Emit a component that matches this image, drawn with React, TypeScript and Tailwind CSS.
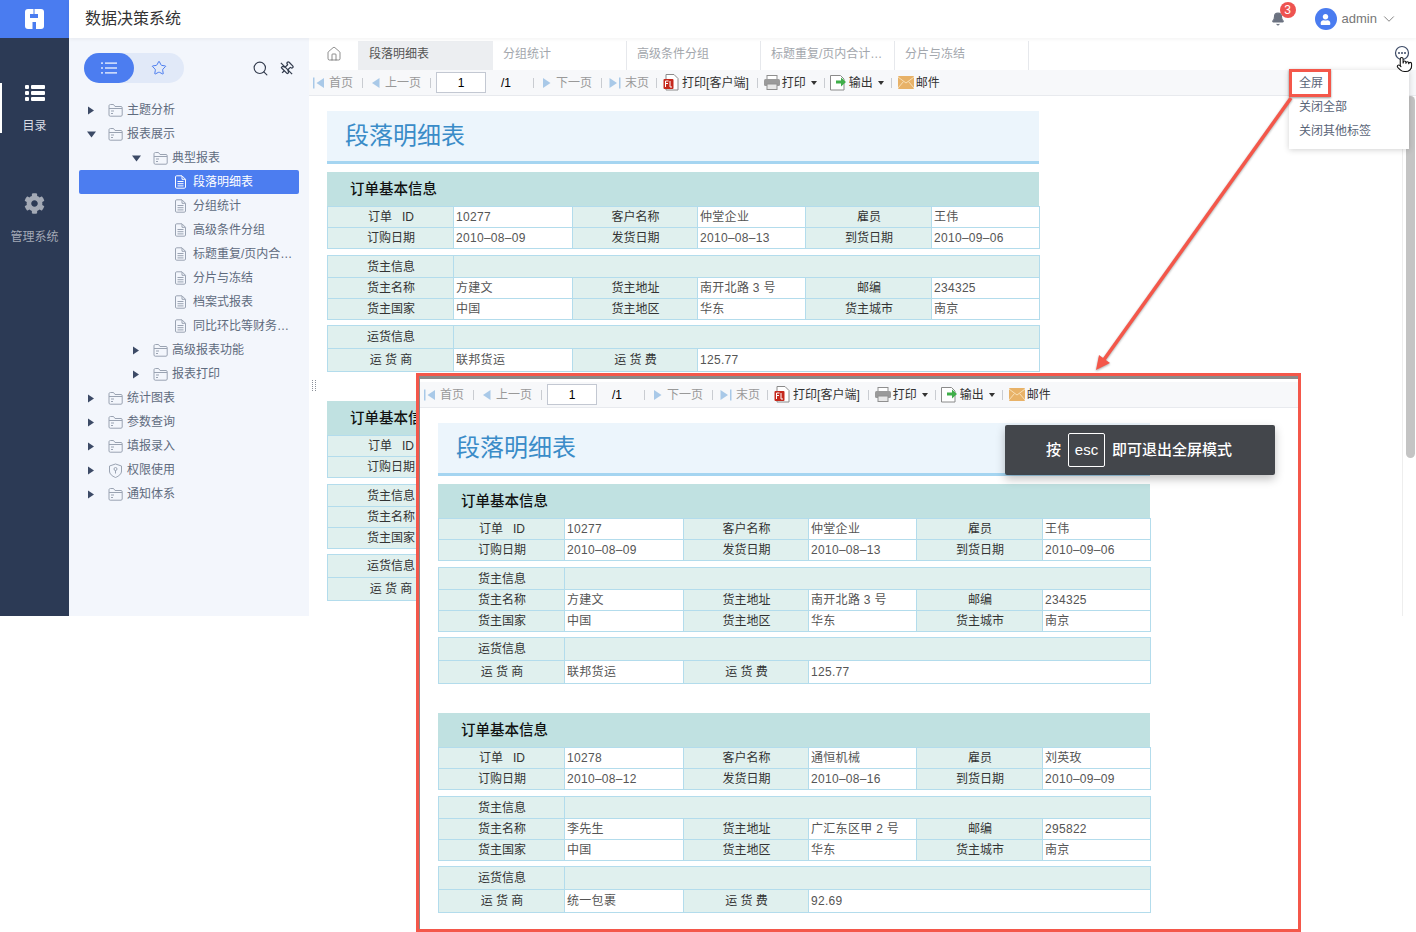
import { ReactNode } from 'react';
import { Bell, ChevronDown, House, Pointer, Search, Star } from 'lucide-react';
import { FaCog, FaUser } from 'react-icons/fa';

const FONT = "font-['Liberation_Sans','Noto_Sans_CJK_SC',sans-serif]";

type TreeNode = {
  label: string;
  level: number;
  kind: 'folder' | 'file' | 'shield';
  arrow?: 'right' | 'down';
  active?: boolean;
};

const tree: TreeNode[] = [
  { label: '主题分析', level: 0, kind: 'folder', arrow: 'right' },
  { label: '报表展示', level: 0, kind: 'folder', arrow: 'down' },
  { label: '典型报表', level: 1, kind: 'folder', arrow: 'down' },
  { label: '段落明细表', level: 2, kind: 'file', active: true },
  { label: '分组统计', level: 2, kind: 'file' },
  { label: '高级条件分组', level: 2, kind: 'file' },
  { label: '标题重复/页内合…', level: 2, kind: 'file' },
  { label: '分片与冻结', level: 2, kind: 'file' },
  { label: '档案式报表', level: 2, kind: 'file' },
  { label: '同比环比等财务…', level: 2, kind: 'file' },
  { label: '高级报表功能', level: 1, kind: 'folder', arrow: 'right' },
  { label: '报表打印', level: 1, kind: 'folder', arrow: 'right' },
  { label: '统计图表', level: 0, kind: 'folder', arrow: 'right' },
  { label: '参数查询', level: 0, kind: 'folder', arrow: 'right' },
  { label: '填报录入', level: 0, kind: 'folder', arrow: 'right' },
  { label: '权限使用', level: 0, kind: 'shield', arrow: 'right' },
  { label: '通知体系', level: 0, kind: 'folder', arrow: 'right' },
];

const orders = [
  {
    id: '10277', customer: '仲堂企业', staff: '王伟', orderDate: '2010–08–09', sendDate: '2010–08–13', arriveDate: '2010–09–06',
    owner: '方建文', address: '南开北路 3 号', zip: '234325', country: '中国', region: '华东', city: '南京', carrier: '联邦货运', fee: '125.77',
  },
  {
    id: '10278', customer: '通恒机械', staff: '刘英玫', orderDate: '2010–08–12', sendDate: '2010–08–16', arriveDate: '2010–09–09',
    owner: '李先生', address: '广汇东区甲 2 号', zip: '295822', country: '中国', region: '华东', city: '南京', carrier: '统一包裹', fee: '92.69',
  },
];

function FolderIcon({ className = '' }: { className?: string }) {
  return (
    <svg width="15" height="14" viewBox="0 0 15 14" fill="none" stroke="#9aa3b2" strokeWidth="1" className={className}>
      <path d="M1 3c0-1 .5-1.500 1.500-1.500h3L7 3.500h6c.7 0 1.200.5 1.200 1.200V12c0 .7-.5 1.200-1.200 1.200H2.200C1.500 13.200 1 12.700 1 12z" />
      <path d="M1 5.500h13M3 8h3M3 10.500h2" />
    </svg>
  );
}

function FileIcon({ active }: { active?: boolean }) {
  const c = active ? '#ffffff' : '#9aa3b2';
  return (
    <svg width="13" height="14" viewBox="0 0 13 14" fill="none" stroke={c} strokeWidth="1">
      <path d="M1.500 2c0-.7.4-1.200 1.100-1.200H8l3.500 3.500V12c0 .7-.5 1.200-1.200 1.200H2.600c-.7 0-1.100-.5-1.100-1.200z" />
      <path d="M8 1v3.300h3.300M3.500 6.500h6M3.500 8.700h6M3.500 10.900h6" />
    </svg>
  );
}

function ShieldIcon() {
  return (
    <svg width="15" height="15" viewBox="0 0 15 15" fill="none" stroke="#9aa3b2" strokeWidth="1">
      <path d="M7.500 1 13.500 3v5c0 3-2.500 5-6 6.500C4 13 1.500 11 1.500 8V3z" />
      <circle cx="7.500" cy="6" r="1.500" />
      <path d="M7.500 7.500v3" />
    </svg>
  );
}

function Triangle({ dir }: { dir: 'right' | 'down' }) {
  return (
    <svg width="9" height="9" viewBox="0 0 9 9" fill="#3c4a66">
      {dir === 'right' ? <path d="M1 0.500 7 4.500 1 8.500z" /> : <path d="M0 1.500h9L4.500 7.500z" />}
    </svg>
  );
}

function TreeRow({ node }: { node: TreeNode }) {
  const pad = ['pl-[8px]', 'pl-[53px]', 'pl-[95px]'][node.level];
  return (
    <div
      className={`flex h-[24px] items-center rounded-[2px] text-[12px] ${pad} ${
        node.active ? 'bg-[#4c7df0] text-white' : 'text-[#5f6b7e]'
      }`}
    >
      {node.kind === 'file' ? (
        <FileIcon active={node.active} />
      ) : (
        <>
          <span className="flex w-[9px] items-center">{node.arrow && <Triangle dir={node.arrow} />}</span>
          <span className="ml-[12px] mr-[4px] flex w-[15px]">{node.kind === 'shield' ? <ShieldIcon /> : <FolderIcon />}</span>
        </>
      )}
      <span className={`whitespace-nowrap ${node.kind === 'file' ? 'ml-[6px]' : ''}`}>{node.label}</span>
    </div>
  );
}

function Sep({ className = '' }: { className?: string }) {
  return <span className={`h-[10px] w-px bg-[#c9ccd1] ${className}`} />;
}

function Caret() {
  return <span className="ml-[5px] h-0 w-0 border-x-[3px] border-t-[4px] border-x-transparent border-t-[#333]" />;
}

// first / prev / next / last page arrows
function PageIcon({ type }: { type: 'first' | 'prev' | 'next' | 'last' }) {
  return (
    <svg width="12" height="12" viewBox="0 0 12 12" fill="#a9c9e8">
      {type === 'first' && <path d="M0 0.500h1.500v11H0zM11 1v10L3.500 6z" />}
      {type === 'prev' && <path d="M9.500 1v10L2 6z" />}
      {type === 'next' && <path d="M2 1v10L9.500 6z" />}
      {type === 'last' && <path d="M0.500 1v10L8 6zM10 0.500h1.500v11H10z" />}
    </svg>
  );
}

function Toolbar() {
  return (
    <div className="flex h-[26px] items-center border-b border-[#e8eaee] bg-[#f7f8fa] pl-[4px] text-[12px] text-[#999]">
      <PageIcon type="first" />
      <span className="ml-[4px]">首页</span>
      <Sep className="ml-[9px]" />
      <span className="ml-[7px] flex"><PageIcon type="prev" /></span>
      <span className="ml-[3px]">上一页</span>
      <Sep className="ml-[9px]" />
      <span className="ml-[5px] flex h-[21px] w-[50px] items-center justify-center border border-[#c3c8d2] bg-white text-[12px] text-black">1</span>
      <span className="ml-[15px] w-[11px] text-black">/1</span>
      <Sep className="ml-[21px]" />
      <span className="ml-[7px] flex"><PageIcon type="next" /></span>
      <span className="ml-[3px]">下一页</span>
      <Sep className="ml-[9px]" />
      <span className="ml-[7px] flex"><PageIcon type="last" /></span>
      <span className="ml-[4px]">末页</span>
      <Sep className="ml-[7px]" />
      <svg width="16" height="17" viewBox="0 0 16 17" className="ml-[6px]">
        <path d="M3 .5h8L15 4.500V16H3z" fill="#fff" stroke="#8a8a8a" />
        <rect x="0.500" y="5" width="10" height="10" rx="1" fill="#c5281c" />
        <path d="M2.500 7h3M2.500 7v6M2.500 9.500h2.500M7 7v6h2" stroke="#fff" strokeWidth="1" fill="none" />
      </svg>
      <span className="ml-[3px] text-[#333]">打印[客户端]</span>
      <Sep className="ml-[8px]" />
      <svg width="16" height="15" viewBox="0 0 16 15" className="ml-[6px]">
        <rect x="3" y="0.500" width="10" height="5" fill="#fff" stroke="#8f8f8f" />
        <rect x="0" y="4" width="16" height="7" rx="1.500" fill="#9a9a9a" />
        <rect x="3" y="9" width="10" height="5.500" fill="#e8e8e8" stroke="#8f8f8f" />
      </svg>
      <span className="ml-[2px] text-[#333]">打印</span>
      <Caret />
      <Sep className="ml-[7px]" />
      <svg width="16" height="17" viewBox="0 0 16 17" className="ml-[5px]">
        <path d="M.5 1.500h10L14 5v11H.5z" fill="#fff" stroke="#8a8a8a" />
        <path d="M6 6.500h5V3.500l5 4.500-5 4.500V9.500H6z" fill="#3fae49" />
      </svg>
      <span className="ml-[3px] text-[#333]">输出</span>
      <Caret />
      <Sep className="ml-[7px]" />
      <svg width="16" height="13" viewBox="0 0 16 13" className="ml-[6px]">
        <rect width="16" height="13" rx="1" fill="#e8b268" />
        <path d="M0 1l8 6 8-6M0 12l5.500-6.500M16 12l-5.500-6.500" fill="none" stroke="#f7dfb5" />
      </svg>
      <span className="ml-[2px] text-[#333]">邮件</span>
    </div>
  );
}

function Label({ children, colSpan }: { children?: ReactNode; colSpan?: number }) {
  return (
    <td colSpan={colSpan} className="border border-[#b3dcec] bg-[#e0f0ee] p-0 pl-[1px] text-center whitespace-pre text-[#333]">
      {children}
    </td>
  );
}

function Value({ children, colSpan }: { children?: ReactNode; colSpan?: number }) {
  return (
    <td colSpan={colSpan} className="border border-[#b3dcec] bg-white p-0 pl-[2px] tracking-[0.3px] whitespace-pre text-[#555]">
      {children}
    </td>
  );
}

function Cols() {
  return (
    <colgroup>
      <col className="w-[126px]" />
      <col className="w-[119px]" />
      <col className="w-[125px]" />
      <col className="w-[108px]" />
      <col className="w-[126px]" />
      <col className="w-[108px]" />
    </colgroup>
  );
}

function OrderTable({ order }: { order: (typeof orders)[number] }) {
  const table = 'w-[712px] table-fixed border-collapse text-[12px]';
  return (
    <div>
      <div className="flex h-[34px] w-[712px] items-center bg-[#c0e1e1] pl-[23px] pt-[1px] text-[14.500px] font-medium text-[#111]">订单基本信息</div>
      <table className={table}>
        <Cols />
        <tbody>
          <tr className="h-[21px]">
            <Label>{'订单   ID'}</Label><Value>{order.id}</Value>
            <Label>客户名称</Label><Value>{order.customer}</Value>
            <Label>雇员</Label><Value>{order.staff}</Value>
          </tr>
          <tr className="h-[21px]">
            <Label>订购日期</Label><Value>{order.orderDate}</Value>
            <Label>发货日期</Label><Value>{order.sendDate}</Value>
            <Label>到货日期</Label><Value>{order.arriveDate}</Value>
          </tr>
        </tbody>
      </table>
      <table className={`${table} mt-[6px]`}>
        <Cols />
        <tbody>
          <tr className="h-[22px]">
            <Label>货主信息</Label><Label colSpan={5} />
          </tr>
          <tr className="h-[21px]">
            <Label>货主名称</Label><Value>{order.owner}</Value>
            <Label>货主地址</Label><Value>{order.address}</Value>
            <Label>邮编</Label><Value>{order.zip}</Value>
          </tr>
          <tr className="h-[21px]">
            <Label>货主国家</Label><Value>{order.country}</Value>
            <Label>货主地区</Label><Value>{order.region}</Value>
            <Label>货主城市</Label><Value>{order.city}</Value>
          </tr>
        </tbody>
      </table>
      <table className={`${table} mt-[5px]`}>
        <Cols />
        <tbody>
          <tr className="h-[23px]">
            <Label>运货信息</Label><Label colSpan={5} />
          </tr>
          <tr className="h-[23px]">
            <Label>运 货 商</Label><Value>{order.carrier}</Value>
            <Label>运 货 费</Label><Value colSpan={3}>{order.fee}</Value>
          </tr>
        </tbody>
      </table>
    </div>
  );
}

function Report() {
  return (
    <div className="pl-[18px] pt-[15px]">
      <div className="flex h-[53px] w-[712px] items-center border-b-[3px] border-[#a5d5f1] bg-[#ecf5fc] pl-[18px] text-[24px] text-[#3a8cc8]">段落明细表</div>
      <div className="mt-[8px] flex flex-col gap-[29px]">
        {orders.map((o) => (
          <OrderTable key={o.id} order={o} />
        ))}
      </div>
    </div>
  );
}

function TabItem({ label, active }: { label: string; active?: boolean }) {
  return (
    <div
      className={`flex h-[29px] items-center pb-[3px] text-[12px] ${
        active ? 'w-[135px] bg-[#eceef1] pl-[11px] text-[#555]' : 'w-[134px] border-r border-[#e6e8ec] pl-[10px] text-[#a3a7ad]'
      }`}
    >
      {label}
    </div>
  );
}

export default function App() {
  return (
    <div className={`relative h-[932px] w-[1416px] overflow-hidden bg-white ${FONT}`}>
      <div className="flex h-[616px] overflow-hidden">
        {/* left rail */}
        <div className="flex w-[69px] shrink-0 flex-col bg-[#2c3a55]">
          <div className="flex h-[38px] shrink-0 items-center justify-center bg-[#4a7cf0]">
            <svg width="19" height="20" viewBox="0 0 19 20">
              <rect width="19" height="20" rx="3" fill="#fff" />
              <path d="M8.500 0h1v5h-1zM5 5h8v4H5zM7.500 13H11v7H7.500z" fill="#4a7cf0" />
            </svg>
          </div>
          <div className="mt-[45px] flex h-[50px] flex-col items-center border-l-2 border-white pr-[2px] pt-[1px] text-[12px] text-[#d9dde5]">
            <svg width="20" height="18" viewBox="0 0 20 18" fill="#fff" className="shrink-0">
              <rect x="0" y="1" width="4" height="4" rx="1" />
              <rect x="6" y="1" width="14" height="4" rx="1" />
              <rect x="0" y="7" width="4" height="4" rx="1" />
              <rect x="6" y="7" width="14" height="4" rx="1" />
              <rect x="0" y="13" width="4" height="4" rx="1" />
              <rect x="6" y="13" width="14" height="4" rx="1" />
            </svg>
            <span className="mt-[15px] shrink-0">目录</span>
          </div>
          <div className="mt-[60px] flex flex-col items-center text-[12px] text-[#a3a9b5]">
            <FaCog size={21} color="#a3a9b5" />
            <span className="mt-[14px]">管理系统</span>
          </div>
        </div>

        <div className="flex min-w-0 flex-1 flex-col">
          {/* top header */}
          <div className="relative z-10 flex h-[38px] shrink-0 items-center bg-white pl-[16px] pr-[18px] shadow-[0_1px_4px_rgba(0,0,0,0.06)]">
            <span className="text-[16px] text-[#333]">数据决策系统</span>
            <div className="relative ml-auto mr-[30px] flex">
              <Bell size={14} fill="#6b7280" color="#6b7280" />
              <span className="absolute left-[9px] top-[-10px] flex h-[16px] w-[16px] items-center justify-center rounded-full bg-[#ee5350] text-[12px] text-white">3</span>
            </div>
            <span className="flex h-[22px] w-[22px] items-center justify-center rounded-full bg-[#4a7cf0]">
              <FaUser size={11} color="#fff" />
            </span>
            <span className="ml-[5px] text-[13px] text-[#777]">admin</span>
            <ChevronDown size={18} strokeWidth={1.2} color="#777" className="ml-[3px]" />
          </div>

          <div className="flex min-h-0 flex-1">
            {/* tree sidebar */}
            <div className="w-[240px] shrink-0 bg-[#f3f6fc] px-[10px]">
              <div className="flex h-[60px] items-center pl-[5px] pr-[5px]">
                <div className="flex h-[30px] w-[100px] rounded-full bg-[#e1e9f8]">
                  <span className="flex w-[50px] items-center justify-center rounded-full bg-[#4c7df0]">
                    <svg width="16" height="12" viewBox="0 0 16 12" fill="#fff">
                      <rect x="0" y="0.500" width="2" height="1.200" />
                      <rect x="4" y="0.500" width="12" height="1.200" />
                      <rect x="0" y="5.400" width="2" height="1.200" />
                      <rect x="4" y="5.400" width="12" height="1.200" />
                      <rect x="0" y="10.300" width="2" height="1.200" />
                      <rect x="4" y="10.300" width="12" height="1.200" />
                    </svg>
                  </span>
                  <span className="flex w-[50px] items-center justify-center">
                    <Star size={16} strokeWidth={1.5} color="#4c7df0" />
                  </span>
                </div>
                <Search size={17} strokeWidth={1.6} color="#333c4e" className="ml-auto" />
                <svg width="15" height="15" viewBox="0 0 24 24" fill="none" stroke="#333c4e" strokeWidth="2" className="ml-[10px]">
                  <g transform="rotate(45 12 12)">
                    <path d="M12 17v5" />
                    <path d="M9 10.760a2 2 0 0 1-1.110 1.790l-1.780.9A2 2 0 0 0 5 15.240V16a1 1 0 0 0 1 1h12a1 1 0 0 0 1-1v-.76a2 2 0 0 0-1.110-1.790l-1.780-.9A2 2 0 0 1 15 10.760V7a1 1 0 0 1 1-1 2 2 0 0 0 0-4H8a2 2 0 0 0 0 4 1 1 0 0 1 1 1z" />
                  </g>
                  <path d="M3 3l18 18" />
                </svg>
              </div>
              {tree.map((n) => (
                <TreeRow key={n.label} node={n} />
              ))}
            </div>

            {/* main */}
            <div className="relative flex min-w-0 flex-1 flex-col">
              <div className="flex h-[32px] shrink-0 items-end bg-white">
                <span className="flex h-[29px] w-[49px] items-center justify-center pb-[3px]">
                  <House size={16} strokeWidth={1} color="#555" />
                </span>
                <TabItem label="段落明细表" active />
                <TabItem label="分组统计" />
                <TabItem label="高级条件分组" />
                <TabItem label="标题重复/页内合计…" />
                <TabItem label="分片与冻结" />
              </div>
              <Toolbar />
              <div className="relative min-h-0 flex-1 overflow-hidden bg-white">
                <Report />
                <div className="absolute bottom-0 right-0 top-0 w-[14px] border-l border-[#eeeeee] bg-white">
                  <div className="ml-[3px] h-[362px] w-[9px] rounded-full bg-[#c4c4c4]" />
                </div>
              </div>
              {/* splitter handle */}
              <svg width="5" height="12" viewBox="0 0 5 12" fill="#8a8f98" className="absolute left-[3px] top-[342px]">
                {[0, 2, 4, 6, 8, 10].map((y) => (
                  <g key={y}>
                    <rect x="0" y={y} width="1" height="1" />
                    <rect x="3" y={y} width="1" height="1" />
                  </g>
                ))}
              </svg>
            </div>
          </div>
        </div>
      </div>

      {/* annotation: fullscreen preview window */}
      <div className="absolute left-[416px] top-[373px] h-[559px] w-[885px] overflow-hidden border-[3px] border-[#f4574a] bg-white">
        <div className="h-full border-l border-t-[3px] border-[#8a8a8a] border-r-[#d8d8d8]">
          <div className="h-[3px] bg-white" />
          <Toolbar />
          <Report />
        </div>
        <div className="absolute left-[586px] top-[49px] flex h-[50px] w-[270px] items-center justify-center rounded-[2px] bg-[#3f4247]/98 pr-[2px] text-[15px] font-medium text-white shadow-[0_4px_10px_rgba(0,0,0,0.25)]">
          <span>按</span>
          <span className="mx-[7px] flex h-[34px] w-[37px] items-center justify-center rounded-[2px] border border-white font-normal">esc</span>
          <span>即可退出全屏模式</span>
        </div>
      </div>

      {/* context menu opened from the "…" button */}
      <div className="absolute left-[1289px] top-[70px] flex h-[79px] w-[120px] flex-col bg-white pl-[10px] pt-[1px] text-[12px] text-[#5a6578] shadow-[0_1px_6px_rgba(0,0,0,0.18)]">
        <span className="flex h-[24px] items-center">全屏</span>
        <span className="flex h-[24px] items-center">关闭全部</span>
        <span className="flex h-[24px] items-center">关闭其他标签</span>
      </div>
      <div className="absolute left-[1289px] top-[69px] h-[28px] w-[42px] border-[3px] border-[#f4574a] shadow-[0_1px_2px_rgba(0,0,0,0.4)]" />

      <svg width="1416" height="932" viewBox="0 0 1416 932" fill="none" className="pointer-events-none absolute left-0 top-0 drop-shadow-[0_1px_1px_rgba(0,0,0,0.35)]">
        <path d="M1291 98 1103 361" stroke="#f4574a" strokeWidth="3.500" />
        <path d="M1096 370 1099 355 1110 363z" fill="#f4574a" />
      </svg>

      {/* more button + hand cursor */}
      <svg width="16" height="16" viewBox="0 0 16 16" fill="none" className="absolute left-[1394px] top-[45px]">
        <circle cx="8" cy="8" r="6.500" stroke="#3c4a66" strokeWidth="1.200" />
        <circle cx="5" cy="8" r="1" fill="#3c4a66" />
        <circle cx="8" cy="8" r="1" fill="#3c4a66" />
        <circle cx="11" cy="8" r="1" fill="#3c4a66" />
      </svg>
      <Pointer size={17} strokeWidth={1.5} color="#111" fill="#fff" className="absolute left-[1396px] top-[56px]" />
    </div>
  );
}
